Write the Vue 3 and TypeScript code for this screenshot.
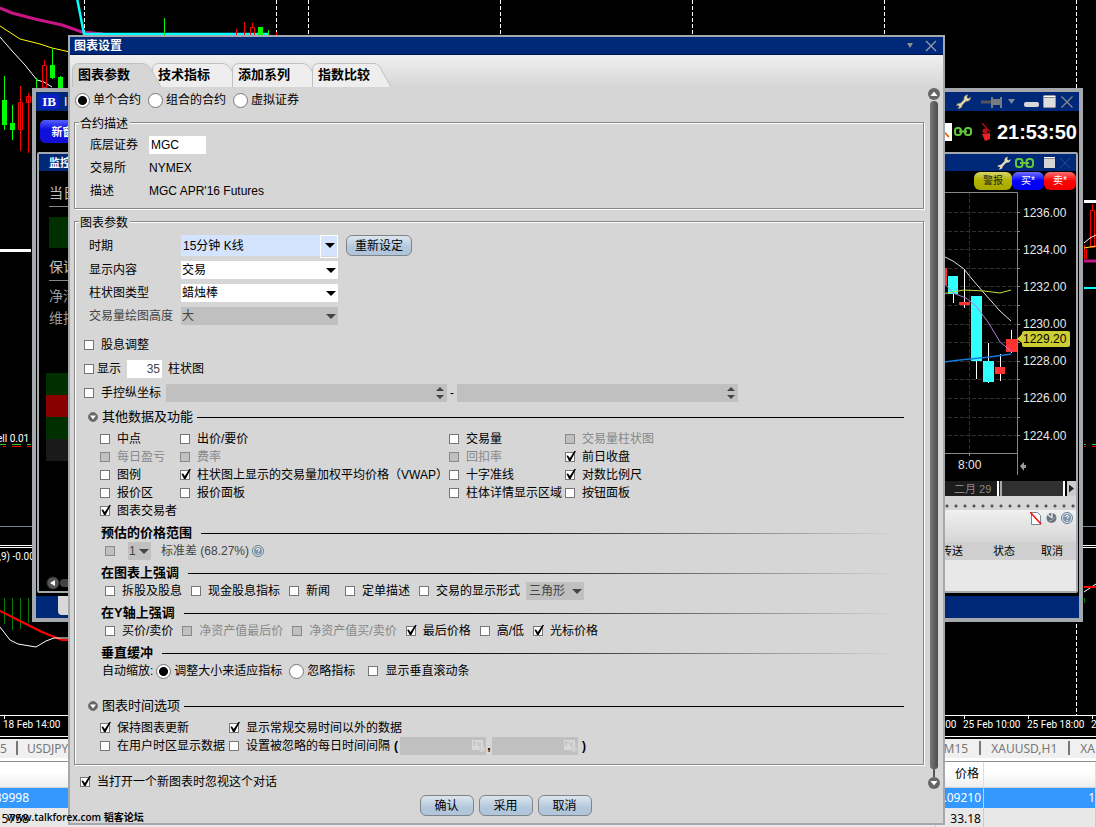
<script setup lang="ts">
import { ref } from 'vue'

interface Option {
  id: string
  label: string
  checked?: boolean
  disabled?: boolean
  wide?: boolean
}
interface Candle {
  x: number
  top: number
  bottom: number
  high: number
  low: number
  color: string
  width: number
}

const tabs = ['图表参数', '技术指标', '添加系列', '指数比较']
const activeTab = ref(0)

const contractKind = ref('single')
const contractKinds = [
  { value: 'single', label: '单个合约' },
  { value: 'combo', label: '组合的合约' },
  { value: 'virtual', label: '虚拟证券' },
]
const symbol = ref('MGC')
const barCount = ref('35')

const dataOptions = ref<Option[]>([
  { id: 'mid', label: '中点' },
  { id: 'bidask', label: '出价/要价' },
  { id: 'volume', label: '交易量' },
  { id: 'volbars', label: '交易量柱状图', disabled: true },
  { id: 'dailypnl', label: '每日盈亏', disabled: true },
  { id: 'fee', label: '费率', disabled: true },
  { id: 'rebate', label: '回扣率', disabled: true },
  { id: 'prevclose', label: '前日收盘', checked: true },
  { id: 'legend', label: '图例' },
  { id: 'vwap', label: '柱状图上显示的交易量加权平均价格（VWAP）', checked: true },
  { id: 'cross', label: '十字准线' },
  { id: 'log', label: '对数比例尺', checked: true },
  { id: 'quotearea', label: '报价区' },
  { id: 'quotepanel', label: '报价面板' },
  { id: 'bardetail', label: '柱体详情显示区域' },
  { id: 'buttons', label: '按钮面板' },
  { id: 'trader', label: '图表交易者', checked: true },
])
const chartMarks = ref<Option[]>([
  { id: 'split', label: '拆股及股息' },
  { id: 'cashdiv', label: '现金股息指标' },
  { id: 'news', label: '新闻', wide: true },
  { id: 'orders', label: '定单描述' },
  { id: 'trades', label: '交易的显示形式' },
])
const axisMarks = ref<Option[]>([
  { id: 'buysell', label: '买价/卖价' },
  { id: 'navlast', label: '净资产值最后价', disabled: true },
  { id: 'navba', label: '净资产值买/卖价', disabled: true },
  { id: 'last', label: '最后价格', checked: true },
  { id: 'highlow', label: '高/低' },
  { id: 'cursor', label: '光标价格', checked: true },
])
const scaling = ref('fit')

const priceLabels = [
  { y: 212, text: '1236.00' },
  { y: 249, text: '1234.00' },
  { y: 286, text: '1232.00' },
  { y: 323, text: '1230.00' },
  { y: 360, text: '1228.00' },
  { y: 397, text: '1226.00' },
  { y: 435, text: '1224.00' },
]
const gridRows = [212, 231, 249, 268, 286, 305, 324, 342, 361, 379, 398, 417, 435]
const candles: Candle[] = [
  { x: 941, top: 268, bottom: 285, high: 262, low: 290, color: '#ff3232', width: 11 },
  { x: 953, top: 276, bottom: 294, high: 276, low: 303, color: '#32ffff', width: 10 },
  { x: 964, top: 302, bottom: 305, high: 269, low: 308, color: '#ff3232', width: 11 },
  { x: 976, top: 296, bottom: 361, high: 296, low: 379, color: '#32ffff', width: 11 },
  { x: 988, top: 361, bottom: 382, high: 343, low: 383, color: '#32ffff', width: 11 },
  { x: 1000, top: 367, bottom: 374, high: 354, low: 381, color: '#ff3232', width: 10 },
  { x: 1011, top: 339, bottom: 352, high: 330, low: 353, color: '#ff3232', width: 11 },
]
const sessionLines = [84, 276, 308, 500, 692, 884, 1076]
const timeLabels = [
  { x: 3, text: '18 Feb 14:00' },
  { x: 899, text: '25 Feb 02:00' },
  { x: 963, text: '25 Feb 10:00' },
  { x: 1027, text: '25 Feb 18:00' },
  { x: 1091, text: '2' },
]
</script>

<template>
  <div class="desktop">
    <svg class="market" viewBox="0 0 1096 736" role="img" aria-label="行情图">
      <rect width="1096" height="736" fill="#000" />
      <g stroke="#fff" stroke-dasharray="4 2">
        <line v-for="x in sessionLines" :key="x" :x1="x + 0.5" y1="0" :x2="x + 0.5" y2="715" />
      </g>
      <path d="M0 8L12 13L35 19L62 25L82 32L103 34" fill="none" stroke="#c71585" stroke-width="3" />
      <path d="M77 -2L84 34H269" fill="none" stroke="#00ffff" stroke-width="2.5" />
      <path d="M0 26L20 39L40 44L52 48L70 52" fill="none" stroke="#ff0" />
      <path d="M0 37L13 52L25 65L37 80L44 82L52 87" fill="none" stroke="#fff" />
      <g fill="#00ff00">
        <path d="M4 76h1v54h-1zM2 100h5v25h-5zM12 105h1v35h-1zM10 123h5v7h-5zM36 78h1v10h-1zM52 49h1v30h-1zM50 65h5v13h-5zM58 77h5v11h-5zM60 76h1v3h-1zM164 18h1v17h-1zM258 27h5v8h-5zM268 30h1v5h-1z" />
      </g>
      <g fill="none" stroke="#ff0000">
        <path d="M20.5 86v65M28.500 93v60M44.500 60v6M244.500 22v13M252.500 23v4M236.500 29v6M276.500 32v3" />
        <path d="M18.500 102.500h4v27h-4zM26.500 96.500h4v6h-4zM42.500 65.500h4v22h-4zM250.500 27.500h4v8h-4z" />
      </g>
      <path d="M0 249h31v3H0zM1084 200h12v3h-12z" fill="#fff" />
      <path d="M0 444.500h6M12 444.500h9M27 444.500h4M1084 444.500h2M1092 444.500h4" stroke="#32cd32" />
      <path d="M3 446.500h3M12 446.500h9M27 446.500h4M1084 446.500h2M1092 446.500h4" stroke="#f00" />
      <path d="M0 526.500h1096" stroke="#708090" />
      <path d="M0 545.500h1096M0 547.500h1096" stroke="#fff" />
      <path d="M4.500 598v26M12.500 598v32M20.500 598v31M28.500 598v25" stroke="#008000" />
      <path d="M0 611L22 622L42 632L62 640H80" fill="none" stroke="#f00" stroke-width="2" />
      <path d="M0 627L10 640L18 644L36 647L46 641L54 638H72" fill="none" stroke="#fff" />
      <path d="M1092.500 204v6M1090.500 210.500h4v37h-4zM1084.500 245v14M1086.500 249v10" fill="none" stroke="#f00" />
      <path d="M1084 243L1090 238L1096 235" fill="none" stroke="#fff" />
      <path d="M1084 248L1096 246" fill="none" stroke="#ff0" />
      <path d="M1084 261H1096" stroke="#c71585" stroke-width="3" />
      <path d="M1084 288H1096" stroke="#0ff" stroke-width="2" />
      <path d="M1084 592L1096 584" stroke="#fff" />
      <path d="M1084 587H1096" stroke="#f00" stroke-width="2" />
      <path d="M1084.500 598v5" stroke="#008000" />
      <path d="M0 715.500h1096M4.500 715v4M964.500 715v4M1028.500 715v4M1092.500 715v4" stroke="#fff" />
      <g class="market-text">
        <text x="-3" y="442">ell 0.01</text>
        <text x="-1" y="560">,9) -0.00</text>
        <text v-for="t in timeLabels" :key="t.text" :x="t.x" y="728">{{ t.text }}</text>
      </g>
    </svg>

    <nav class="symbol-tabs" aria-label="图表">
      <div class="tabs-left">
        <a href="#m5">5</a><a href="#usdjpy">USDJPY</a>
      </div>
      <div class="tabs-right">
        <a href="#m15">M15</a><a href="#xauusd">XAUUSD,H1</a><a href="#xa">XA</a>
      </div>
    </nav>

    <table class="orders">
      <colgroup><col class="c-id" /><col /><col class="c-price" /><col class="c-last" /></colgroup>
      <thead><tr><th></th><th></th><th>价格</th><th></th></tr></thead>
      <tbody>
        <tr class="picked"><td class="id">89998</td><td></td><td class="num">.09210</td><td class="num">1</td></tr>
        <tr><td class="id">5758</td><td></td><td class="num">33.18</td><td></td></tr>
      </tbody>
    </table>

    <section class="ib" aria-label="IB">
      <header class="ib-title">
        <span class="ib-logo">IB</span><span class="ib-name">IB</span>
        <span class="ib-icons">
          <svg width="15" height="15" viewBox="0 0 16 16"><path d="M8.500 6Q8 1.500 12.500 .8L11.500 3.500L13 5L15.500 3.500Q15.500 8 10.500 7.800L6.500 12Q6.500 15.500 2 15.500L3.500 13.500L2.500 12L.5 12.500Q1 9.500 4.500 10z" fill="#e6dcb0" stroke="#8f8460" stroke-width=".7" /></svg>
          <svg class="pin" width="24" height="14" viewBox="0 0 24 14"><path d="M1 7h11" stroke="#555" stroke-width="3" /><path d="M11 2h2v2h7V2h2v11h-2v-3h-7v3h-2z" fill="#777d85" /></svg>
          <svg width="7" height="5" viewBox="0 0 7 5"><path d="M0 0h7L3.500 5z" fill="#808890" /></svg>
          <svg class="mini" width="15" height="13" viewBox="0 0 15 13"><rect y="7" width="15" height="5" rx="2" fill="#d8d8d8" /></svg>
          <svg width="13" height="13" viewBox="0 0 13 13"><rect x=".5" y=".5" width="12" height="12" rx="1" fill="#ddd" stroke="#999" /><path d="M1 1.500h11" stroke="#fff" /><path d="M1 2.500h11" stroke="#888" /></svg>
          <svg width="12" height="12" viewBox="0 0 12 12"><path d="M.5 .5L11.500 11.500M11.500 .5L.5 11.500" stroke="#8c8c90" stroke-width="1.200" /></svg>
        </span>
      </header>
      <div class="ib-bar">
        <button type="button" class="new-window">新窗口</button>
        <span class="ib-status">
          <svg width="8" height="18" viewBox="0 0 8 18"><path d="M0 0h8v18H0z" fill="#fff" /><path d="M0 9l5 5" stroke="#e87820" stroke-width="2" /></svg>
          <svg width="18" height="9" viewBox="0 0 18 9"><g fill="none" stroke="#62c73b" stroke-width="2"><rect x="1" y="1" width="6" height="7" rx="2.500" /><rect x="11" y="1" width="6" height="7" rx="2.500" /><path d="M5 4.500h8" /></g></svg>
          <svg class="phone" width="10" height="18" viewBox="0 0 10 18"><path d="M1 0L9 9" stroke="#a11" stroke-width="1.500" /><circle cx="4" cy="8" r="2.500" fill="#b31217" /><path d="M1 11l8-1v6l-5 2z" fill="#ee2028" /></svg>
          <time>21:53:50</time>
        </span>
      </div>
      <div class="work">
        <header class="work-title">
          <span>监控</span>
          <span class="work-icons">
            <svg width="14" height="14" viewBox="0 0 16 16"><path d="M8.500 6Q8 1.500 12.500 .8L11.500 3.500L13 5L15.500 3.500Q15.500 8 10.500 7.800L6.500 12Q6.500 15.500 2 15.500L3.500 13.500L2.500 12L.5 12.500Q1 9.500 4.500 10z" fill="#e6dcb0" /></svg>
            <svg width="19" height="10" viewBox="0 0 19 10"><g fill="none" stroke="#62c73b" stroke-width="2"><rect x="1" y="1" width="6.500" height="8" rx="2.500" /><rect x="11.500" y="1" width="6.500" height="8" rx="2.500" /><path d="M5 5h9" /></g></svg>
            <svg class="max2" width="11" height="11" viewBox="0 0 11 11"><rect width="11" height="11" fill="#d5d5d5" /><path d="M0 .5h11" stroke="#fff" /><path d="M0 1.500h11" stroke="#888" /></svg>
            <svg width="10" height="10" viewBox="0 0 10 10"><path d="M0 0L10 10M10 0L0 10" stroke="#2b4684" /></svg>
          </span>
        </header>
        <div class="work-body">
          <div class="account">
            <p class="line first">当日</p>
            <div class="swatch"></div>
            <p class="line second">保证金</p>
            <p class="dim">净清算</p>
            <p class="dim">维持</p>
            <div class="bands"><i class="g"></i><i class="r"></i><i class="g"></i><i class="k"></i></div>
            <svg class="scroll-left" width="24" height="14" viewBox="0 0 24 14"><rect x="14" y="3" width="12" height="8" rx="4" fill="#444" /><circle cx="7" cy="7" r="6" fill="#555" stroke="#333" /><path d="M9 4v6L4 7z" fill="#fff" /></svg>
          </div>
          <div class="quote">
            <div class="trade-buttons">
              <button type="button" class="alert">警报</button>
              <button type="button" class="buy">买*</button>
              <button type="button" class="sell">卖*</button>
            </div>
            <svg width="140" height="290" viewBox="936 191 140 290">
              <rect x="936" y="191" width="140" height="290" />
              <g stroke="#303030" stroke-dasharray="4 2">
                <path v-for="y in gridRows" :key="y" :d="`M936 ${y + 0.5}H1017`" />
                <path d="M969.500 193V453" />
              </g>
              <path d="M936 192.500H1017.500V475M936 453.500H1017M969.500 453v3" fill="none" stroke="#888" />
              <path v-for="y in gridRows" :key="'t' + y" :d="`M1017 ${y + 0.5}h3`" stroke="#888" />
              <g v-for="c in candles" :key="c.x">
                <path :d="`M${c.x + 0.5} ${c.high}V${c.low}`" stroke="#fff" />
                <rect :x="c.x - 5" :y="c.top" :width="c.width" :height="c.bottom - c.top" :fill="c.color" />
              </g>
              <g fill="none">
                <path d="M936 250L945 257L953 261L964 269L972 279L984 293L1000 311L1011 321" stroke="#e0e0e0" />
                <path d="M936 295L953 292L964 290L984 291L1000 293L1011 290" stroke="#bfe03a" />
                <path d="M936 276L945 284L953 293L966 298L976 306L988 322L1000 342L1011 351" stroke="#a880d8" />
                <path d="M936 363L960 360L990 357L1011 354" stroke="#1478d8" stroke-width="1.500" />
              </g>
              <g class="price-text">
                <text v-for="p in priceLabels" :key="p.y" x="1023" :y="p.y + 5">{{ p.text }}</text>
                <text x="958" y="469">8:00</text>
              </g>
              <path d="M1017 339L1022 334V333Q1022 331 1024 331H1068Q1070 331 1070 333V345Q1070 347 1068 347H1024Q1022 347 1022 345V343z" fill="#cccc33" />
              <text class="price-now" x="1023" y="343">1229.20</text>
              <path d="M1020 466l4-4v3h2v3h-2v3z" fill="#999" />
            </svg>
            <div class="timeline"><span>二月 29</span><i></i><button type="button" aria-label="下一页"></button></div>
            <div class="dots"></div>
            <div class="order-tools">
              <svg width="12" height="13" viewBox="0 0 12 13"><path d="M1.500 .5h6l3 3v9h-9z" fill="#fff" stroke="#789" /><path d="M0 0l11 12" stroke="#f00" stroke-width="1.500" /></svg>
              <svg width="11" height="12" viewBox="0 0 11 12"><circle cx="5.500" cy="6" r="5" fill="#6a737c" /><path d="M1 2l5 4M6 1v5" stroke="#dfe5ea" stroke-width="1.500" /><path d="M3 9Q7 9 9 5" fill="none" stroke="#a9b2ba" /></svg>
              <svg width="12" height="12" viewBox="0 0 12 12"><circle cx="6" cy="6" r="5.500" fill="#dbe6ef" stroke="#66798c" /><circle cx="6" cy="6" r="4" fill="#7f96ab" /><path d="M4.500 5Q4.500 3.500 6 3.500T7.500 5Q7.500 5.700 6 6.500M6 8v1" fill="none" stroke="#fff" /></svg>
            </div>
            <table class="order-head"><thead><tr><th class="h1">传送</th><th class="h2">状态</th><th class="h3">取消</th></tr></thead></table>
          </div>
        </div>
      </div>
      <footer class="ib-foot"><span></span></footer>
    </section>

    <form class="dialog" role="dialog" aria-labelledby="dlg-title" @submit.prevent>
      <header class="dlg-title">
        <h1 id="dlg-title">图表设置</h1>
        <button type="button" aria-label="菜单"><svg width="6" height="5" viewBox="0 0 6 5"><path d="M0 0h6L3 5z" fill="#8a8f96" /></svg></button>
        <button type="button" aria-label="关闭"><svg width="12" height="12" viewBox="0 0 12 12"><path d="M1 1L11 11M11 1L1 11" stroke="#98a0ac" stroke-width="1.200" /></svg></button>
      </header>
      <div class="tablist" role="tablist">
        <button v-for="(t, i) in tabs" :key="t" type="button" role="tab" class="tab" :class="{ active: i === activeTab }" :aria-selected="i === activeTab" @click="activeTab = i">
          <svg width="92" height="24" viewBox="0 0 92 24">
            <path v-if="i < 3" d="M.5 25V7Q.5 .5 7 .5H70Q76 .5 80 8L89.500 25" />
            <path v-else d="M.5 25V7Q.5 .5 7 .5H62Q67 .5 70 8L79.500 25" />
          </svg>
          <span>{{ t }}</span>
        </button>
      </div>

      <div class="dlg-body">
        <div class="dlg-content">
          <div class="row kinds">
            <label v-for="k in contractKinds" :key="k.value" class="radio"><input v-model="contractKind" type="radio" name="kind" :value="k.value" />{{ k.label }}</label>
          </div>

          <fieldset class="contract">
            <legend>合约描述</legend>
            <div class="stack">
              <div class="row"><label class="name short" for="sym">底层证券</label><input id="sym" v-model="symbol" class="text sym" type="text" /></div>
              <div class="row"><span class="name short">交易所</span><span>NYMEX</span></div>
              <div class="row"><span class="name short">描述</span><span>MGC APR'16 Futures</span></div>
            </div>
          </fieldset>

          <fieldset class="params">
            <legend>图表参数</legend>
            <div class="stack">
              <div class="row tall">
                <label class="name" for="period">时期</label>
                <span class="pick focus"><select id="period"><option>15分钟 K线</option></select></span>
                <button type="button" class="btn reset">重新设定</button>
              </div>
              <div class="row"><label class="name" for="content">显示内容</label><span class="pick"><select id="content"><option>交易</option></select></span></div>
              <div class="row"><label class="name" for="bartype">柱状图类型</label><span class="pick"><select id="bartype"><option>蜡烛棒</option></select></span></div>
              <div class="row off"><label class="name" for="volh">交易量绘图高度</label><span class="pick"><select id="volh" disabled><option>大</option></select></span></div>
            </div>
            <div class="stack checks">
              <div class="row"><label class="check"><input type="checkbox" />股息调整</label></div>
              <div class="row"><label class="check close"><input type="checkbox" />显示</label><input v-model="barCount" class="text count" type="text" aria-label="柱状图数量" /><span>柱状图</span></div>
              <div class="row"><label class="check"><input type="checkbox" />手控纵坐标</label><span class="spin first-spin"><input type="text" aria-label="最低" disabled /></span><span class="dash">-</span><span class="spin"><input type="text" aria-label="最高" disabled /></span></div>
            </div>

            <h2 class="section"><button type="button" aria-expanded="true"><svg width="10" height="10" viewBox="0 0 10 10"><circle cx="5" cy="5" r="4.500" fill="#666" stroke="#777" /><path d="M2 3.500h6L5 7.500z" fill="#fff" /></svg>其他数据及功能</button></h2>
            <div class="grid">
              <label v-for="o in dataOptions" :key="o.id" class="check" :class="{ off: o.disabled }"><input v-model="o.checked" type="checkbox" :disabled="o.disabled" />{{ o.label }}</label>
            </div>

            <h3 class="sub">预估的价格范围</h3>
            <div class="row inset off">
              <input type="checkbox" disabled aria-label="预估的价格范围" />
              <span class="pick dev"><select aria-label="标准差倍数" disabled><option>1</option></select></span>
              <span class="std">标准差 (68.27%)</span>
              <svg width="12" height="12" viewBox="0 0 12 12"><circle cx="6" cy="6" r="5.500" fill="#dbe6ef" stroke="#66798c" /><circle cx="6" cy="6" r="4" fill="#7f96ab" /><path d="M4.500 5Q4.500 3.500 6 3.500T7.500 5Q7.500 5.700 6 6.500M6 8v1" fill="none" stroke="#fff" /></svg>
            </div>

            <h3 class="sub">在图表上强调</h3>
            <div class="row inset marks">
              <label v-for="o in chartMarks" :key="o.id" class="check" :class="{ wide: o.wide }"><input v-model="o.checked" type="checkbox" />{{ o.label }}</label>
              <span class="pick shape off"><select aria-label="交易的显示形式" disabled><option>三角形</option></select></span>
            </div>

            <h3 class="sub">在Y轴上强调</h3>
            <div class="row inset marks">
              <label v-for="o in axisMarks" :key="o.id" class="check" :class="{ off: o.disabled }"><input v-model="o.checked" type="checkbox" :disabled="o.disabled" />{{ o.label }}</label>
            </div>

            <h3 class="sub">垂直缓冲</h3>
            <div class="row scale">
              <span>自动缩放:</span>
              <label class="radio"><input v-model="scaling" type="radio" name="scale" value="fit" />调整大小来适应指标</label>
              <label class="radio"><input v-model="scaling" type="radio" name="scale" value="ignore" />忽略指标</label>
              <label class="check vscroll"><input type="checkbox" />显示垂直滚动条</label>
            </div>

            <h2 class="section time"><button type="button" aria-expanded="true"><svg width="10" height="10" viewBox="0 0 10 10"><circle cx="5" cy="5" r="4.500" fill="#666" stroke="#777" /><path d="M2 3.500h6L5 7.500z" fill="#fff" /></svg>图表时间选项</button></h2>
            <div class="time-grid">
              <label class="check"><input type="checkbox" checked />保持图表更新</label>
              <label class="check"><input type="checkbox" checked />显示常规交易时间以外的数据</label>
              <label class="check"><input type="checkbox" />在用户时区显示数据</label>
              <div class="row">
                <label class="check"><input type="checkbox" />设置被忽略的每日时间间隔</label>
                <b class="paren">(</b>
                <span class="clock"><input type="text" disabled aria-label="开始时间" /><svg width="13" height="13" viewBox="0 0 13 13"><path d="M0 1h11v10H0z" fill="#d8d8d8" /><path d="M1 3h3M2 3v4M5 3l2 4M8 3v4" stroke="#bbb" fill="none" /><circle cx="10" cy="10" r="3" fill="#d0d0d0" /></svg></span>
                <b class="comma">,</b>
                <span class="clock"><input type="text" disabled aria-label="结束时间" /><svg width="13" height="13" viewBox="0 0 13 13"><path d="M0 1h11v10H0z" fill="#d8d8d8" /><path d="M1 3h3M2 3v4M5 3l2 4M8 3v4" stroke="#bbb" fill="none" /><circle cx="10" cy="10" r="3" fill="#d0d0d0" /></svg></span>
                <b class="paren">)</b>
              </div>
            </div>
          </fieldset>

          <div class="row skip"><label class="check"><input type="checkbox" checked />当打开一个新图表时忽视这个对话</label></div>
        </div>

        <div class="scrollbar" aria-hidden="true">
          <svg width="12" height="12" viewBox="0 0 12 12"><circle cx="6" cy="6" r="6" fill="#666" /><path d="M2.500 8h7L6 3.500z" fill="#fff" /></svg>
          <i class="thumb"></i><i class="rail"></i>
          <svg width="12" height="12" viewBox="0 0 12 12"><circle cx="6" cy="6" r="6" fill="#666" /><path d="M2.500 4h7L6 8.500z" fill="#fff" /></svg>
        </div>
      </div>

      <div class="actions">
        <button type="submit" class="btn">确认</button>
        <button type="button" class="btn">采用</button>
        <button type="button" class="btn">取消</button>
      </div>
    </form>

    <p class="watermark">www.talkforex.com 韬客论坛</p>
  </div>
</template>

<style>
body { background: #e8e8e8; overflow: hidden; }
</style>

<style scoped>
.desktop { position: relative; min-height: 100vh; overflow: hidden; background: #e8e8e8; font: 12px/18px "Liberation Sans", "Noto Sans CJK SC", sans-serif; color: #000; }
.desktop * { box-sizing: border-box; }
.desktop button, .desktop input, .desktop select { font: inherit; color: inherit; margin: 0; }
h1, h2, h3, p { margin: 0; font-size: 12px; }
svg { display: block; flex: none; }

/* background terminal */
.market { width: 100%; height: auto; }
.market-text { font: 10px Roboto, sans-serif; fill: #fff; }
.symbol-tabs { display: flex; justify-content: space-between; height: 26px; padding: 4px 1px 0 0; background: #f0f0f0; border-top: 1px solid #fff; border-bottom: 1px solid #909090; box-shadow: inset 0 2px 0 #000, inset 0 -3px 0 #fff; font-family: "Noto Sans", sans-serif; overflow: hidden; }
.symbol-tabs a { color: #777; text-decoration: none; line-height: 16px; }
.symbol-tabs a + a { margin-left: 11px; padding-left: 10px; border-left: 2px solid #777; }
.symbol-tabs .tabs-left a + a { margin-left: 9px; padding-left: 9px; }
.tabs-left, .tabs-right { display: flex; height: 14px; }
.orders { width: 100%; table-layout: fixed; border-collapse: collapse; font-family: "Noto Sans", "Noto Sans CJK SC", sans-serif; }
.orders .c-id { width: 68px; }
.orders .c-price { width: 48px; }
.orders .c-last { width: 112px; }
.orders th { height: 25px; padding: 0 4px; font-weight: normal; text-align: right; background: linear-gradient(#fff 40%, #eee); border-bottom: 1px solid #d0d0d0; border-right: 1px solid #ddd; }
.orders td { height: 21px; padding: 0; white-space: nowrap; overflow: hidden; border-right: 1px solid #ccc; }
.orders .id { border-right: 0; text-align: right; padding-right: 39px; direction: rtl; }
.orders .num { text-align: right; padding-right: 2px; }
.orders .num:last-child { padding-right: 0; }
.picked { background: #3399ff; color: #fff; }
.watermark { position: absolute; left: 7px; top: 808px; font: 600 10px/18px "Open Sans", "Noto Sans CJK SC", sans-serif; }

/* trading window */
.ib { position: absolute; left: 32px; right: 13px; top: 88px; background: #000; border: 4px solid #a5a8ac; }
.ib-title { display: flex; align-items: center; justify-content: space-between; height: 19px; padding: 0 6px 0 3px; background: #002878; }
.ib-logo { width: 20px; text-align: center; background: #0a1ec8; color: #fff; font: bold 13px/15px "Liberation Serif", serif; }
.ib-name { flex: 1; margin-left: 5px; color: #fff; }
.ib-icons { display: flex; align-items: center; gap: 4px; }
.ib-icons .pin { margin-left: 5px; }
.ib-icons .mini { margin-left: 5px; }
.ib-icons svg:last-child { margin-left: 1px; }
.ib-bar { display: flex; align-items: center; justify-content: space-between; height: 41px; padding: 0 2px 0 4px; }
.desktop .new-window { width: 56px; height: 23px; padding: 0; border: 0; border-radius: 5px; background: linear-gradient(#5560ff, #1010e0 40%, #1010d8); color: #fff; font-weight: bold; font-size: 11px; }
.ib-status { display: flex; align-items: center; gap: 2px; }
.ib-status .phone { margin: 0 4px 0 7px; }
.ib-status time { color: #fff; font-weight: bold; font-size: 20px; line-height: 24px; }
.work { margin: 0 1px; border: 2px solid #a5a8ac; border-radius: 2px; background: #000; }
.work-title { display: flex; align-items: center; justify-content: space-between; height: 17px; padding: 0 6px 0 10px; background: #002878; color: #fff; font-weight: bold; font-size: 11px; }
.work-icons { display: flex; align-items: center; gap: 4px; }
.work-icons .max2 { margin: 0 1px 0 6px; }
.work-body { display: flex; justify-content: space-between; }
.account { width: 120px; padding: 10px 0 0 7px; color: #c0c0c0; }
.account .line { margin-left: 3px; border-bottom: 1px solid #888; line-height: 24px; height: 26px; font-size: 14px; }
.account .dim { margin-left: 3px; font-size: 14px; line-height: 22px; color: #999; }
.swatch { height: 31px; margin: 10px 0 0 3px; background: #003000; }
.account .second { margin: 7px 0 4px 3px; }
.bands { display: grid; grid-auto-rows: 22px; margin-top: 44px; }
.bands .g { background: #003000; }
.bands .r { background: #880000; }
.bands .k { background: #1a1a1a; }
.scroll-left { margin-top: 115px; }
.quote { width: 140px; background: #e8e8e8; }
.trade-buttons { display: flex; justify-content: flex-end; height: 20px; padding-top: 1px; background: #000; }
.desktop .trade-buttons button { width: 32px; height: 18px; padding: 0; border: 0; border-radius: 6px; font-size: 10px; line-height: 18px; color: #fff; }
.desktop .trade-buttons .alert { width: 38px; color: #222; background: linear-gradient(#d4d470, #b4b400 45%, #a8a800); }
.trade-buttons .buy { background: linear-gradient(#7070ff, #0000ff 50%, #0000f0); }
.trade-buttons .sell { background: linear-gradient(#ff7070, #ff0000 50%, #f00000); }
.price-text { font: 12px "Liberation Sans", sans-serif; fill: #e8e8e8; }
.price-now { font: 12px "Liberation Sans", sans-serif; fill: #000; }
.timeline { display: flex; height: 15px; background: #1c1c1c; color: #888; font-size: 11px; line-height: 16px; }
.timeline span { flex: 1; padding-left: 18px; }
.timeline i { width: 70px; background: linear-gradient(90deg, #fff 2px, #222 2px, #222 3px, #aaa 3px, #aaa 5px, #303030 5px, #303030 66px, #fff 66px, #fff 68px, #000 68px); }
.timeline button { width: 9px; }
.desktop .timeline button { padding: 0; border: 0; background: #ccc; }
.timeline button::after { content: ""; display: block; width: 5px; height: 8px; margin-left: 2px; background: #223; clip-path: polygon(0 0, 100% 50%, 0 100%); }
.dots { height: 14px; background: #d6d6d6 radial-gradient(circle at 2px 10px, #555 1px, transparent 2px) 0 0 / 9px 14px; }
.order-tools { display: flex; justify-content: flex-end; gap: 4px; height: 32px; padding: 2px 3px; background: linear-gradient(#f0f0f0, #d6d6d6); }
.order-head { width: 100%; border-collapse: collapse; table-layout: fixed; background: #cfcfcf; font-size: 11px; margin-bottom: 31px; }
.order-head th { height: 18px; padding: 0; font-weight: normal; line-height: 18px; }
.order-head .h1 { width: 32px; }
.order-head .h2 { padding-left: 12px; }
.order-head .h3 { width: 48px; }
.ib-foot { display: flex; height: 22px; margin-top: 3px; background: #002878; }
.ib-foot span { width: 80px; height: 19px; margin-left: 22px; background: #d8d8d8; border-radius: 0 0 4px 4px; }

/* settings dialog */
.dialog { position: absolute; left: 68px; right: 151px; top: 35px; background: #d6d6d6; border: 2px solid #a5a8ac; }
.dlg-title { display: flex; align-items: center; height: 18px; padding: 0 6px 0 4px; background: #002878; color: #fff; border-bottom: 1px solid #001450; }
.dlg-title h1 { flex: 1; }
.desktop .dlg-title button { display: flex; padding: 0; border: 0; background: none; margin-left: 12px; }
.tablist { display: flex; height: 32px; padding: 8px 0 0 2px; background: linear-gradient(#f0f0f0, #d6d6d6); }
.tab { position: relative; width: 80px; height: 24px; padding: 0; border: 0; background: none; text-align: left; }
.tab.active { z-index: 2; }
.tab svg { position: absolute; left: 0; top: 0; fill: #eee; stroke: #c0c0c0; }
.tab.active svg { fill: #d6d6d6; }
.tab span { position: relative; padding-left: 6px; font-size: 13px; font-weight: bold; line-height: 22px; }
.dlg-body { display: flex; gap: 4px; padding: 0 3px 0 4px; }
.dlg-content { flex: 1; min-width: 0; }
.row { display: flex; align-items: center; height: 18px; white-space: nowrap; }
.row.tall { height: 21px; }
.kinds { height: 25px; padding: 1px 0 0 1px; gap: 7px; }
.radio { display: flex; align-items: center; gap: 3px; }
.radio input { appearance: none; width: 15px; height: 15px; border: 1px solid #777; border-radius: 50%; background: #fff; }
.radio input:checked { background: radial-gradient(circle, #000 4px, #fff 5px); }
fieldset { margin: 0; min-width: 0; border: 1px solid #888; box-shadow: 1px 1px 0 #fff, inset 1px 1px 0 #fff; }
legend { padding: 4px 2px 0 1px; line-height: 16px; background: #d6d6d6; }
.contract { padding: 4px 19px 8px 15px; }
.contract legend { margin-left: -11px; }
.params { margin-top: 2px; padding: 4px 19px 9px 14px; }
.params legend { margin-left: -10px; }
.stack { display: grid; gap: 5px; }
.checks { gap: 6px; margin: 11px 0 0 -5px; }
.name { width: 92px; }
.name.short { width: 59px; }
.text { height: 18px; border: 0; background: #fff; padding: 0 2px; }
.sym { width: 57px; }
.desktop .count { width: 35px; margin: 0 6px; text-align: right; color: #444; }
.pick { position: relative; width: 157px; height: 18px; background: #fff; }
.pick select { appearance: none; width: 100%; height: 100%; padding: 0 16px 0 1px; border: 0; border-radius: 0; background: transparent; opacity: 1; }
.pick::after { content: ""; position: absolute; right: 2px; top: 7px; width: 10px; height: 5px; background: #000; clip-path: polygon(0 0, 100% 0, 50% 100%); pointer-events: none; }
.pick.focus { height: 21px; background: #d4e4ff; }
.pick.focus select { padding-left: 2px; }
.pick.focus::before { content: ""; position: absolute; right: 0; top: 0; width: 16px; height: 21px; border: 1px solid #fff; pointer-events: none; }
.pick.focus::after { top: 8px; right: 3px; }
.off { color: #444; }
.off.check { color: #888; }
.off .pick, .off.pick { background: #c0c0c0; }
.off .pick::after, .off.pick::after { background: #444; }
.btn { width: 54px; height: 21px; padding: 0; border: 1px solid #808488; border-radius: 6px; background: linear-gradient(#dce6ee, #b4c8dc 60%, #b0c4da); line-height: 16px; }
.reset { width: 66px; }
.desktop .reset { margin-left: 8px; }
input[type="checkbox"] { appearance: none; position: relative; flex: none; width: 10px; height: 10px; border: 1px solid #777; background: #fff; }
input[type="checkbox"]:disabled { background: #c0c0c0; border-color: #888; }
input[type="checkbox"]:checked::after { content: ""; position: absolute; left: 0; top: -2px; width: 10px; height: 10px; background: #000; clip-path: polygon(4% 48%, 20% 44%, 38% 70%, 84% 0, 100% 0, 46% 100%, 30% 100%); }
.check { display: flex; align-items: center; gap: 7px; height: 18px; white-space: nowrap; }
.checks .close { gap: 3px; }
.spin { position: relative; flex: 0 1 281px; height: 18px; background: #c0c0c0; }
.first-spin { margin-left: 5px; }
.spin input { width: 100%; height: 18px; border: 0; background: none; }
.spin::before, .spin::after { content: ""; position: absolute; right: 3px; width: 8px; height: 4px; background: #444; }
.spin::before { top: 3px; clip-path: polygon(50% 0, 100% 100%, 0 100%); }
.spin::after { bottom: 3px; clip-path: polygon(0 0, 100% 0, 50% 100%); }
.dash { width: 10px; text-align: center; }
.section { display: flex; align-items: center; height: 18px; margin: 6px 0 0 -1px; font-weight: normal; }
.desktop .section button { display: flex; align-items: center; gap: 4px; padding: 0; border: 0; background: none; height: 18px; font-size: 13px; }
.section::after { content: ""; flex: 1; height: 1px; margin-left: 4px; background: #000; }
.grid { display: grid; grid-template-columns: 80px 269px 116px 1fr; grid-auto-rows: 18px; margin: 4px 0 0 11px; }
.sub { display: flex; align-items: center; height: 18px; margin: 4px 7px 0 12px; font-size: 13px; }
.sub::after { content: ""; flex: 1; height: 1px; margin-left: 9px; background: linear-gradient(90deg, #000 40%, transparent); }
.inset { margin-left: 16px; }
.inset .dev { width: 23px; margin: 0 10px 0 13px; }
.inset .dev select { padding-right: 0; }
.std { margin-right: 3px; }
.marks { gap: 9px; }
.marks .wide { margin-right: 6px; }
.marks .shape { width: 58px; margin-left: -3px; }
.shape select { padding-left: 3px; }
.scale { margin-left: 13px; gap: 3px; }
.scale .radio + .radio { margin-left: 4px; }
.scale .vscroll { margin-left: 10px; }
.section.time { margin-top: 17px; }
.time-grid { display: grid; grid-template-columns: 129px 1fr; grid-auto-rows: 18px; margin: 4px 0 0 11px; }
.paren { margin: 0 2px 0 4px; }
.comma { width: 6px; text-align: center; }
.clock { position: relative; flex: 0 1 86px; height: 18px; background: #c0c0c0; }
.clock input { width: 100%; height: 18px; border: 0; background: none; }
.clock svg { position: absolute; right: 1px; top: 2px; }
.skip { margin: 8px 0 0 6px; }
.scrollbar { display: flex; flex-direction: column; align-items: center; width: 12px; padding: 1px 0 2px; }
.thumb { flex: 1; width: 8px; margin-top: 1px; border-radius: 4px 4px 3px 3px; background: linear-gradient(90deg, #777, #4c4c4c); }
.rail { width: 2px; height: 8px; background: #555; }
.actions { display: flex; justify-content: center; gap: 5px; padding: 4px 2px 7px 0; }
</style>
